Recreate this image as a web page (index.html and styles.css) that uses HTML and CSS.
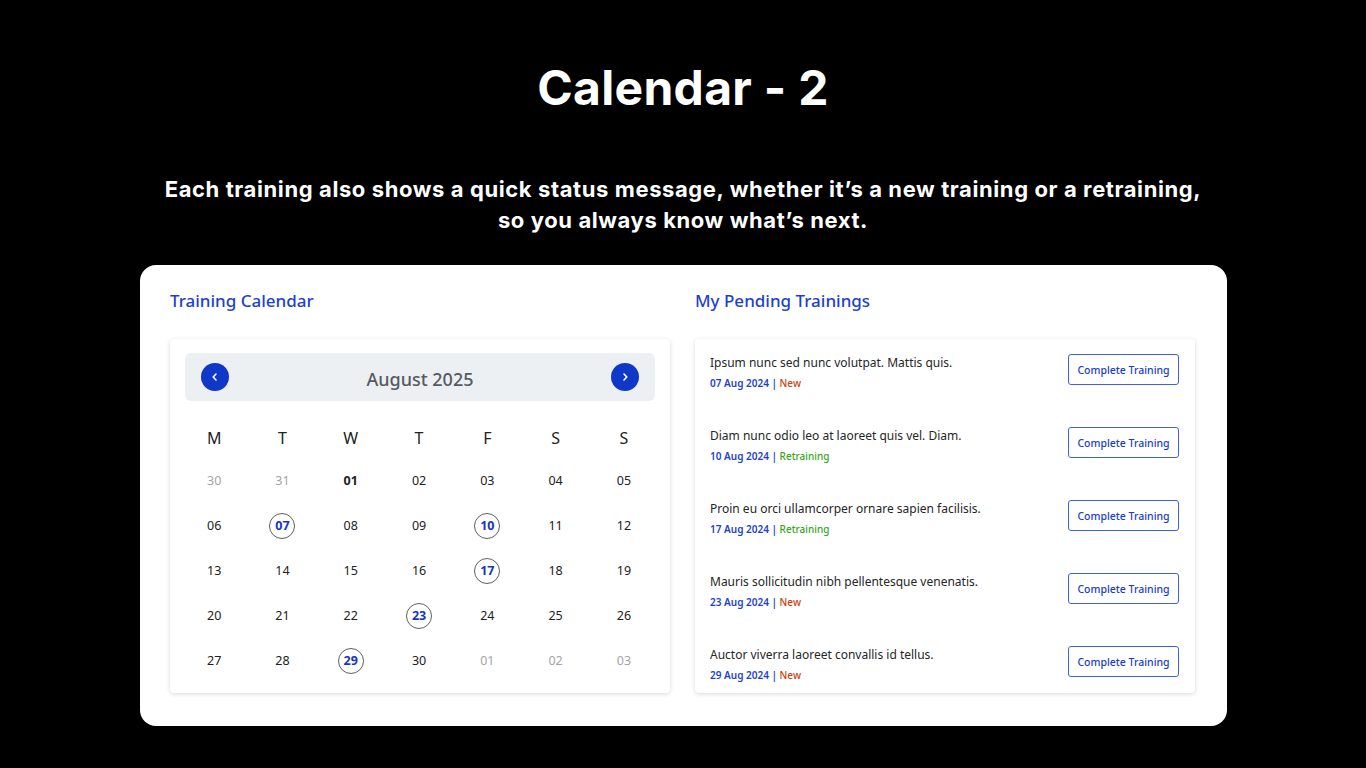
FILE: index.html
```html
<!DOCTYPE html>
<html lang="en">
<head>
<meta charset="utf-8">
<title>Calendar - 2</title>
<link rel="stylesheet" href="styles.css">
</head>
<body>
<main class="slide">
  <h1 class="title">Calendar - 2</h1>
  <p class="subtitle">Each training also shows a quick status message, whether it’s a new training or a retraining,<br>so you always know what’s next.</p>
  <section class="card">
    <div class="col">
      <h2 class="heading">Training Calendar</h2>
      <div class="panel cal">
        <div class="cal-head">
          <button class="nav" aria-label="Previous month"><svg viewBox="0 0 10 10" width="10" height="10"><path d="M6 2 L3.2 5 L6 8" fill="none" stroke="#fff" stroke-width="1.6" stroke-linecap="round" stroke-linejoin="round"/></svg></button>
          <span class="month">August 2025</span>
          <button class="nav" aria-label="Next month"><svg viewBox="0 0 10 10" width="10" height="10"><path d="M4 2 L6.8 5 L4 8" fill="none" stroke="#fff" stroke-width="1.6" stroke-linecap="round" stroke-linejoin="round"/></svg></button>
        </div>
        <div class="grid">
          <div class="wd">M</div><div class="wd">T</div><div class="wd">W</div><div class="wd">T</div><div class="wd">F</div><div class="wd">S</div><div class="wd">S</div>
          <div class="d muted">30</div><div class="d muted">31</div><div class="d bold">01</div><div class="d">02</div><div class="d">03</div><div class="d">04</div><div class="d">05</div>
          <div class="d">06</div><div class="d"><span class="mark">07</span></div><div class="d">08</div><div class="d">09</div><div class="d"><span class="mark">10</span></div><div class="d">11</div><div class="d">12</div>
          <div class="d">13</div><div class="d">14</div><div class="d">15</div><div class="d">16</div><div class="d"><span class="mark">17</span></div><div class="d">18</div><div class="d">19</div>
          <div class="d">20</div><div class="d">21</div><div class="d">22</div><div class="d"><span class="mark">23</span></div><div class="d">24</div><div class="d">25</div><div class="d">26</div>
          <div class="d">27</div><div class="d">28</div><div class="d"><span class="mark">29</span></div><div class="d">30</div><div class="d muted">01</div><div class="d muted">02</div><div class="d muted">03</div>
        </div>
      </div>
    </div>
    <div class="col">
      <h2 class="heading">My Pending Trainings</h2>
      <div class="panel list">
        <div class="item">
          <div class="info"><div class="name">Ipsum nunc sed nunc volutpat. Mattis quis.</div><div class="meta"><span class="date">07 Aug 2024 |</span> <span class="new">New</span></div></div>
          <button class="btn">Complete Training</button>
        </div>
        <div class="item">
          <div class="info"><div class="name">Diam nunc odio leo at laoreet quis vel. Diam.</div><div class="meta"><span class="date">10 Aug 2024 |</span> <span class="re">Retraining</span></div></div>
          <button class="btn">Complete Training</button>
        </div>
        <div class="item">
          <div class="info"><div class="name">Proin eu orci ullamcorper ornare sapien facilisis.</div><div class="meta"><span class="date">17 Aug 2024 |</span> <span class="re">Retraining</span></div></div>
          <button class="btn">Complete Training</button>
        </div>
        <div class="item">
          <div class="info"><div class="name">Mauris sollicitudin nibh pellentesque venenatis.</div><div class="meta"><span class="date">23 Aug 2024 |</span> <span class="new">New</span></div></div>
          <button class="btn">Complete Training</button>
        </div>
        <div class="item">
          <div class="info"><div class="name">Auctor viverra laoreet convallis id tellus.</div><div class="meta"><span class="date">29 Aug 2024 |</span> <span class="new">New</span></div></div>
          <button class="btn">Complete Training</button>
        </div>
      </div>
    </div>
  </section>
</main>
</body>
</html>
```

FILE: styles.css
```css
* { box-sizing: border-box; }
html, body { margin: 0; padding: 0; background: #000; }
body { width: 1366px; height: 768px; overflow: hidden; font-family: "Noto Sans", "Open Sans", sans-serif; }

.slide { display: flex; flex-direction: column; align-items: center; }

.title {
  margin: 60px 0 0;
  font-family: "Inter", "Lato", sans-serif;
  font-weight: 700;
  font-size: 48px;
  line-height: 56px;
  letter-spacing: 0.3px;
  color: #fff;
}
.subtitle {
  margin: 58px 0 0;
  font-family: "Inter", "Lato", sans-serif;
  font-weight: 700;
  font-size: 22px;
  line-height: 31px;
  color: #fff;
  text-align: center;
  letter-spacing: 0.6px;
  white-space: nowrap;
}

.card {
  margin: 29px 0 0 1px;
  width: 1087px;
  height: 461px;
  background: #fff;
  border-radius: 16px;
  padding: 24px 32px 0 30px;
  display: flex;
  gap: 25px;
}
.col { width: 500px; display: flex; flex-direction: column; }
.heading {
  margin: 0;
  font-size: 17px;
  font-weight: 500;
  line-height: 24px;
  color: #1d3fcf;
  height: 50px;
}

.panel {
  background: #fff;
  border-radius: 4px;
  box-shadow: 0 1px 4px rgba(0,0,0,0.16);
  height: 354px;
}

.cal { padding: 14px 15px 10px 10px; }
.cal-head {
  margin-left: 5px;
  height: 48px;
  background: #edf0f3;
  border-radius: 6px;
  display: flex;
  align-items: center;
  justify-content: space-between;
  padding: 0 16px;
}
.nav {
  width: 28px; height: 28px;
  border-radius: 50%;
  border: none;
  background: #1038c8;
  padding: 0;
  display: flex; align-items: center; justify-content: center;
}
.month { font-size: 18px; color: #555a60; font-weight: 500; padding-top: 4px; }

.grid {
  margin-top: 17px;
  display: grid;
  grid-template-columns: repeat(7, 68.3px);
  grid-template-rows: 40px repeat(5, 45px);
}
.wd {
  display: flex; align-items: center; justify-content: center;
  font-size: 16px; color: #222;
}
.d {
  display: flex; align-items: center; justify-content: center;
  font-size: 12.5px; color: #222;
}
.d.muted { color: #a5a5a5; }
.d.bold { font-weight: 700; }
.mark {
  width: 26px; height: 26px;
  border-radius: 50%;
  border: 1px solid #5f5f5f;
  display: flex; align-items: center; justify-content: center;
  color: #1434c9;
  font-weight: 700;
}

.list { padding: 15px 16px 0 15px; display: flex; flex-direction: column; gap: 37px; }
.item { height: 36px; display: flex; justify-content: space-between; align-items: flex-start; }
.name { font-size: 12px; line-height: 16px; color: #262626; padding-top: 1px; }
.meta { font-size: 10px; line-height: 14px; margin-top: 5px; font-weight: 600; }
.date { color: #1d3fcf; }
.new { color: #c8420e; font-weight: 500; }
.re { color: #36a51a; font-weight: 500; }
.btn {
  width: 111px; height: 31px;
  border: 1px solid #3d62e3;
  border-radius: 3px;
  background: #fff;
  color: #1a3ccc;
  font-family: "Noto Sans", sans-serif;
  font-size: 10.5px;
  font-weight: 500;
  padding: 0;
}
```
